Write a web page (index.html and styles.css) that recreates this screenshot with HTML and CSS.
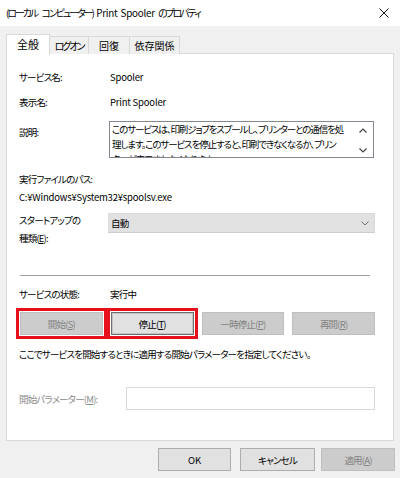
FILE: index.html
```html
<!DOCTYPE html>
<html lang="ja">
<head>
<meta charset="utf-8">
<link rel="stylesheet" href="styles.css">
</head>
<body>
<div class="window">
  <div class="titlebar">
    <span class="title"><span class="tja">(ローカル コンピューター)</span> <span class="latin">Print Spooler</span> <span class="tja">のプロパティ</span></span>
    <svg class="close" width="10" height="10" viewBox="0 0 10 10"><path d="M0.5 0.5L9.5 9.5M9.5 0.5L0.5 9.5" stroke="#111" stroke-width="1" fill="none"/></svg>
  </div>
  <div class="tabs">
    <div class="tab active">全般</div>
    <div class="tab kana">ログオン</div>
    <div class="tab kanji">回復</div>
    <div class="tab kanji">依存関係</div>
  </div>
  <div class="panel">
    <div class="row r1"><span class="label">サービス名:</span><span class="value latin">Spooler</span></div>
    <div class="row r2"><span class="label">表示名:</span><span class="value latin">Print Spooler</span></div>
    <div class="row desc">
      <span class="label desc-label">説明:</span>
      <div class="descbox">
        <div class="desctext">このサービスは、印刷ジョブをスプールし、プリンターとの通信を処<br>理します。このサービスを停止すると、印刷できなくなるか、プリン<br>ターが表示されなくなります。</div>
        <div class="scroll">
          <svg width="8" height="5" viewBox="0 0 8 5"><path d="M0.5 4.5L4 1L7.5 4.5" stroke="#444" stroke-width="1.2" fill="none"/></svg>
          <svg width="8" height="5" viewBox="0 0 8 5"><path d="M0.5 0.5L4 4L7.5 0.5" stroke="#444" stroke-width="1.2" fill="none"/></svg>
        </div>
      </div>
    </div>
    <div class="line exec">実行ファイルのパス:</div>
    <div class="line path latin">C:¥Windows¥System32¥spoolsv.exe</div>
    <div class="row startup">
      <span class="label two">スタートアップの<br>種類(<u>E</u>):</span>
      <div class="combo"><span>自動</span>
        <svg width="8" height="5" viewBox="0 0 8 5"><path d="M0.5 0.5L4 4L7.5 0.5" stroke="#707070" stroke-width="1" fill="none"/></svg>
      </div>
    </div>
    <div class="sep"></div>
    <div class="row state"><span class="label">サービスの状態:</span><span class="value">実行中</span></div>
    <div class="btnrow">
      <div class="btn disabled marked">開始(<u>S</u>)</div>
      <div class="btn default marked">停止(<u>T</u>)</div>
      <div class="btn disabled">一時停止(<u>P</u>)</div>
      <div class="btn disabled">再開(<u>R</u>)</div>
    </div>
    <div class="line hint">ここでサービスを開始するときに適用する開始パラメーターを指定してください。</div>
    <div class="row param">
      <span class="label plabel">開始パラメーター(<u>M</u>):</span>
      <div class="input"></div>
    </div>
  </div>
  <div class="footer">
    <div class="btn fbtn latin">OK</div>
    <div class="btn fbtn">キャンセル</div>
    <div class="btn fbtn disabled">適用(<u>A</u>)</div>
  </div>
</div>
</body>
</html>
```
FILE: styles.css
```css
* { box-sizing: border-box; }
html, body { margin: 0; padding: 0; }
body {
  width: 400px;
  height: 478px;
  background: #f0f0f0;
  font-family: "Noto Sans CJK JP", "Noto Sans", sans-serif;
  font-size: 9.5px;
  font-feature-settings: "palt";
  letter-spacing: -0.8px;
  color: #000;
  overflow: hidden;
}
.latin { letter-spacing: -0.2px; }
u { text-decoration: underline; text-underline-offset: 1px; }
.window { display: flex; flex-direction: column; }
.titlebar {
  height: 26px;
  background: #fff;
  display: flex;
  align-items: center;
  justify-content: space-between;
  padding: 0 11px 0 6px;
}
.title { font-size: 9.8px; white-space: nowrap; letter-spacing: 0; word-spacing: 1px; }
.tja { letter-spacing: -1.9px; word-spacing: 4px; }
.tabs {
  display: flex;
  align-items: flex-end;
  padding: 7px 0 0 6px;
  height: 27px;
  position: relative;
  z-index: 1;
}
.tab {
  height: 18px;
  border: 1px solid #d9d9d9;
  border-bottom: none;
  background: #f0f0f0;
  display: flex;
  align-items: center;
  justify-content: center;
  margin-bottom: -1px;
  margin-left: -1px;
  font-size: 10px;
}
.tab.kana { letter-spacing: -2px; }
.tab.kanji { letter-spacing: 0; }
.tab:nth-child(2) { width: 40px; }
.tab:nth-child(3) { width: 42px; }
.tab:nth-child(4) { width: 51px; }
.tab.active {
  width: 44px;
  height: 21px;
  background: #fff;
  margin-left: 0;
  margin-bottom: -2px;
  font-size: 11px;
  letter-spacing: 0;
  padding-bottom: 2px;
  z-index: 2;
}
.panel {
  margin-left: 6px;
  width: 388px;
  height: 388px;
  background: #fff;
  border: 1px solid #d9d9d9;
  padding: 15px 18px 0 12px;
  display: flex;
  flex-direction: column;
}
.row { display: flex; align-items: center; }
.label { width: 91px; flex: none; line-height: 16px; }
.value { line-height: 16px; }
.r2 { margin-top: 9px; }
.desc { margin-top: 11px; align-items: flex-start; }
.desc-label { margin-top: 3px; }
.descbox {
  margin-left: -1px;
  width: 265px;
  height: 37px;
  border: 1px solid #828790;
  display: flex;
  overflow: hidden;
}
.desctext {
  flex: 1;
  padding: 0 0 0 2px;
  line-height: 15px;
  white-space: nowrap;
  letter-spacing: -1.1px;
  overflow: hidden;
}
.scroll {
  width: 16px;
  flex: none;
  display: flex;
  flex-direction: column;
  justify-content: space-between;
  align-items: center;
  padding: 6px 4px 4px 0;
}
.line { line-height: 16px; }
.exec { margin-top: 13px; }
.path { margin-top: 2px; }
.startup { margin-top: 6px; align-items: flex-start; }
.two { line-height: 18px; }
.combo {
  margin-left: -2px;
  margin-top: 2px;
  width: 267px;
  height: 20px;
  background: #e1e1e1;
  border: 1px solid #dadada;
  border-bottom-color: #cdcdcd;
  display: flex;
  align-items: center;
  justify-content: space-between;
  padding: 0 5px 0 2px;
}
.sep {
  margin-top: 28px;
  margin-left: 1px;
  width: 350px;
  height: 1px;
  background: #a0a0a0;
}
.state { margin-top: 10px; }
.btnrow {
  margin-top: 10px;
  margin-left: 1px;
  display: grid;
  grid-template-columns: repeat(4, 1fr);
  column-gap: 8px;
  width: 355px;
}
.btn {
  height: 23px;
  background: #e1e1e1;
  border: 1px solid #adadad;
  display: flex;
  align-items: center;
  justify-content: center;
}
.btn.disabled {
  background: #cccccc;
  border-color: #bfbfbf;
  color: #838383;
}
.btn.default {
  border-color: #6e6e6e;
  box-shadow: inset 0 0 0 1px #c4c4c4;
}
.btn.marked { outline: 3px solid #e5101c; outline-offset: 1px; }
.hint { margin-top: 11px; }
.param { margin-top: 25px; }
.plabel { width: 107px; color: #8a8a8a; }
.input {
  width: 249px;
  height: 23px;
  border: 1px solid #d9d9d9;
  background: #fff;
}
.footer {
  display: flex;
  justify-content: flex-end;
  gap: 8px;
  padding: 7px 5px 0 0;
}
.fbtn:nth-child(1) { width: 73px; }
.fbtn:nth-child(2) { width: 75px; margin-left: 1px; }
.fbtn:nth-child(3) { width: 74px; margin-left: -2px; }
```
